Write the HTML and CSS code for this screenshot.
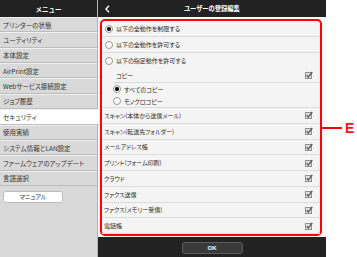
FILE: index.html
```html
<!DOCTYPE html>
<html lang="ja">
<head>
    <meta charset="UTF-8">
    <meta name="viewport" content="width=device-width, initial-scale=1.0">
    <title>ユーザーの登録編集</title>
    <link rel="stylesheet" href="styles.css">
</head>
<body>
    <div class="screen">
        <div class="menu">
            <div class="menu-head">メニュー</div>
            <div class="menu-item">プリンターの状態</div>
            <div class="menu-item">ユーティリティ</div>
            <div class="menu-item">本体設定</div>
            <div class="menu-item">AirPrint設定</div>
            <div class="menu-item">Webサービス接続設定</div>
            <div class="menu-item">ジョブ履歴</div>
            <div class="menu-item active">セキュリティ</div>
            <div class="menu-item">使用実績</div>
            <div class="menu-item">システム情報とLAN設定</div>
            <div class="menu-item">ファームウェアのアップデート</div>
            <div class="menu-item">言語選択</div>
            <div class="manual-btn">マニュアル</div>
        </div>

        <div class="panel">
            <div class="panel-head">
                <span class="back">
                    <svg width="5" height="8" viewBox="0 0 5 8"><path d="M4 0.8 L1 4 L4 7.2" fill="none" stroke="#fff" stroke-width="1.4"/></svg>
                </span>
                <span class="panel-title">ユーザーの登録編集</span>
                <span></span>
            </div>

            <div class="panel-body">
                <div class="mark">
                    <div class="opt"><span class="radio on"></span>以下の全動作を制限する</div>
                    <div class="opt"><span class="radio"></span>以下の全動作を許可する</div>
                    <div class="opt-group">
                        <div class="opt plain"><span class="radio"></span>以下の指定動作を許可する</div>
                        <div class="copy">
                            <div class="copy-head">
                                <span>コピー</span>
                                <svg class="check" width="8" height="8" viewBox="0 0 8 8"><rect x="0.5" y="1.5" width="6" height="6" fill="#e2e2e2" stroke="#909090"/><path d="M1.7 4.2 L3.3 5.9 L7.3 1" fill="none" stroke="#5a5a5a" stroke-width="1.3"/></svg>
                            </div>
                            <div class="sub"><span class="radio on"></span>すべてのコピー</div>
                            <div class="sub"><span class="radio"></span>モノクロコピー</div>
                        </div>
                    </div>
                    <div class="perm"><span>スキャン(本体から送信メール)</span><svg class="check" width="8" height="8" viewBox="0 0 8 8"><rect x="0.5" y="1.5" width="6" height="6" fill="#e2e2e2" stroke="#909090"/><path d="M1.7 4.2 L3.3 5.9 L7.3 1" fill="none" stroke="#5a5a5a" stroke-width="1.3"/></svg></div>
                    <div class="perm"><span>スキャン(転送先フォルダー)</span><svg class="check" width="8" height="8" viewBox="0 0 8 8"><rect x="0.5" y="1.5" width="6" height="6" fill="#e2e2e2" stroke="#909090"/><path d="M1.7 4.2 L3.3 5.9 L7.3 1" fill="none" stroke="#5a5a5a" stroke-width="1.3"/></svg></div>
                    <div class="perm"><span>メールアドレス帳</span><svg class="check" width="8" height="8" viewBox="0 0 8 8"><rect x="0.5" y="1.5" width="6" height="6" fill="#e2e2e2" stroke="#909090"/><path d="M1.7 4.2 L3.3 5.9 L7.3 1" fill="none" stroke="#5a5a5a" stroke-width="1.3"/></svg></div>
                    <div class="perm"><span>プリント(フォーム印刷)</span><svg class="check" width="8" height="8" viewBox="0 0 8 8"><rect x="0.5" y="1.5" width="6" height="6" fill="#e2e2e2" stroke="#909090"/><path d="M1.7 4.2 L3.3 5.9 L7.3 1" fill="none" stroke="#5a5a5a" stroke-width="1.3"/></svg></div>
                    <div class="perm"><span>クラウド</span><svg class="check" width="8" height="8" viewBox="0 0 8 8"><rect x="0.5" y="1.5" width="6" height="6" fill="#e2e2e2" stroke="#909090"/><path d="M1.7 4.2 L3.3 5.9 L7.3 1" fill="none" stroke="#5a5a5a" stroke-width="1.3"/></svg></div>
                    <div class="perm"><span>ファクス送信</span><svg class="check" width="8" height="8" viewBox="0 0 8 8"><rect x="0.5" y="1.5" width="6" height="6" fill="#e2e2e2" stroke="#909090"/><path d="M1.7 4.2 L3.3 5.9 L7.3 1" fill="none" stroke="#5a5a5a" stroke-width="1.3"/></svg></div>
                    <div class="perm"><span>ファクス(メモリー受信)</span><svg class="check" width="8" height="8" viewBox="0 0 8 8"><rect x="0.5" y="1.5" width="6" height="6" fill="#e2e2e2" stroke="#909090"/><path d="M1.7 4.2 L3.3 5.9 L7.3 1" fill="none" stroke="#5a5a5a" stroke-width="1.3"/></svg></div>
                    <div class="perm"><span>電話帳</span><svg class="check" width="8" height="8" viewBox="0 0 8 8"><rect x="0.5" y="1.5" width="6" height="6" fill="#e2e2e2" stroke="#909090"/><path d="M1.7 4.2 L3.3 5.9 L7.3 1" fill="none" stroke="#5a5a5a" stroke-width="1.3"/></svg></div>

                    <div class="callout">
                        <span class="callout-line"></span>
                        <span class="callout-label">E</span>
                    </div>
                </div>
            </div>

            <div class="panel-foot">
                <button type="button" class="ok-btn">OK</button>
            </div>
        </div>
    </div>
</body>
</html>
```

FILE: styles.css
```css
* {
    box-sizing: border-box;
}

body {
    margin: 0;
    background: #fff;
    font-family: "Noto Sans CJK JP", sans-serif;
    color: #2b2b2b;
}

.screen {
    display: flex;
    width: 357px;
    height: 257px;
}

/* left menu */
.menu {
    flex: none;
    width: 98px;
    background: #d9d9d9;
    border-right: 1px solid #b4b4b4;
}

.menu-head {
    height: 17px;
    display: flex;
    align-items: center;
    justify-content: center;
    background: #222;
    color: #fff;
    font-size: 6.5px;
    font-weight: bold;
}

.menu-item {
    height: 15.36px;
    display: flex;
    align-items: center;
    padding-left: 3px;
    font-size: 6.5px;
    font-feature-settings: "palt";
    color: #333;
    border-top: 1px solid #efefef;
    border-bottom: 1px solid #bdbdbd;
}

.menu-item.active {
    position: relative;
    margin-right: -2px;
    background: #fff;
}

.manual-btn {
    width: 60px;
    height: 12px;
    margin: 5px 0 0 3px;
    display: flex;
    align-items: center;
    justify-content: center;
    background: #fff;
    border: 1px solid #bdbdbd;
    border-radius: 3px;
    font-size: 6px;
    font-feature-settings: "palt";
    color: #333;
}

/* right panel */
.panel {
    flex: none;
    width: 228px;
    display: flex;
    flex-direction: column;
    background: #f7f7f7;
}

.panel-head {
    height: 17px;
    display: grid;
    grid-template-columns: 18px 1fr 18px;
    align-items: center;
    background: #222;
    color: #fff;
}

.back {
    display: flex;
    padding-left: 7px;
}

.panel-title {
    text-align: center;
    font-size: 6.3px;
    font-weight: bold;
    font-feature-settings: "palt";
}

.panel-body {
    flex: 1;
    padding: 2px 4px 1px 2px;
}

.mark {
    position: relative;
    height: 100%;
    display: flex;
    flex-direction: column;
    border: 2px solid #ff0000;
    border-radius: 5px;
    background: #f4f4f4;
    font-size: 6px;
    font-feature-settings: "palt";
}

.opt {
    flex: none;
    height: 16px;
    display: flex;
    align-items: center;
    padding-left: 3px;
    border-bottom: 1px solid #dcdcdc;
}

.opt.plain {
    height: 15px;
    border-bottom: none;
}

.opt-group {
    flex: none;
    border-bottom: 1px solid #dcdcdc;
}

.radio {
    flex: none;
    width: 8px;
    height: 8px;
    margin-right: 3px;
    border: 1px solid #9a9a9a;
    border-radius: 50%;
    background: #fff;
}

.radio.on {
    background: radial-gradient(circle, #111 0 1.9px, #fff 2.3px);
}

.copy {
    margin-left: 12px;
}

.copy-head {
    height: 15px;
    display: flex;
    align-items: center;
    justify-content: space-between;
    padding: 0 7px 0 2px;
    border-bottom: 1px solid #dcdcdc;
}

.sub {
    height: 12.5px;
    display: flex;
    align-items: center;
    margin-left: -1px;
}

.sub:last-child {
    height: 11.5px;
}

.perm {
    flex: 1;
    display: flex;
    align-items: center;
    justify-content: space-between;
    padding: 0 7px 0 2px;
    border-bottom: 1px solid #dcdcdc;
}

.perm:last-of-type {
    border-bottom: none;
}

.check {
    flex: none;
}

/* annotation label */
.callout {
    position: absolute;
    left: calc(100% + 2px);
    top: 50%;
    transform: translateY(-50%);
    display: flex;
    align-items: center;
    gap: 3px;
}

.callout-line {
    width: 20px;
    height: 2px;
    background: #ff0000;
}

.callout-label {
    font-family: "Liberation Sans", sans-serif;
    font-size: 14px;
    font-weight: bold;
    line-height: 1;
    color: #ff1010;
}

.panel-foot {
    flex: none;
    height: 20px;
    display: flex;
    justify-content: center;
    padding-top: 5px;
    background: #222;
}

.ok-btn {
    width: 61px;
    height: 12px;
    padding: 0;
    background: #3a3a3a;
    border: 1px solid #5c5c5c;
    border-radius: 3px;
    color: #fff;
    font-family: "Liberation Sans", sans-serif;
    font-size: 6px;
    font-weight: bold;
}
```
